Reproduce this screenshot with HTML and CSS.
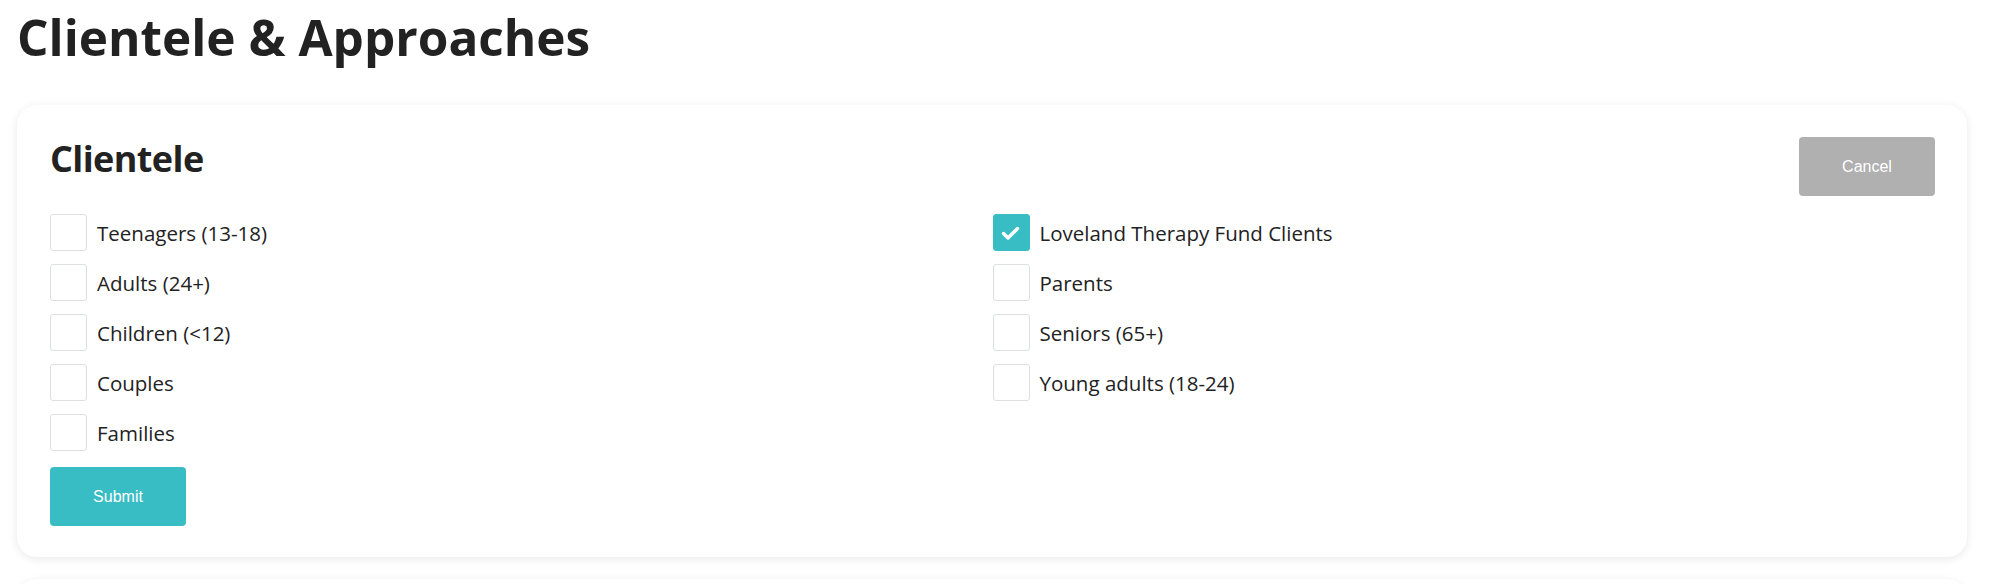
FILE: index.html
```html
<!DOCTYPE html>
<html lang="en">
<head>
<meta charset="utf-8">
<title>Clientele &amp; Approaches</title>
<link rel="stylesheet" href="styles.css">
</head>
<body>
<main class="page">
  <h1 class="page-title">Clientele &amp; Approaches</h1>
  <section class="card">
    <div class="card-header">
      <h2 class="card-title">Clientele</h2>
      <button class="btn btn-cancel" type="button">Cancel</button>
    </div>
    <ul class="options">
      <li class="option"><span class="box"></span><span class="label">Teenagers (13-18)</span></li>
      <li class="option"><span class="box box-checked"><svg viewBox="0 0 37 37" width="37" height="37"><polyline points="11.5,19.5 16,24 25.5,14.5" fill="none" stroke="#fff" stroke-width="3.4" stroke-linecap="round" stroke-linejoin="round"/></svg></span><span class="label">Loveland Therapy Fund Clients</span></li>
      <li class="option"><span class="box"></span><span class="label">Adults (24+)</span></li>
      <li class="option"><span class="box"></span><span class="label">Parents</span></li>
      <li class="option"><span class="box"></span><span class="label">Children (&lt;12)</span></li>
      <li class="option"><span class="box"></span><span class="label">Seniors (65+)</span></li>
      <li class="option"><span class="box"></span><span class="label">Couples</span></li>
      <li class="option"><span class="box"></span><span class="label">Young adults (18-24)</span></li>
      <li class="option"><span class="box"></span><span class="label">Families</span></li>
    </ul>
    <button class="btn btn-submit" type="button">Submit</button>
  </section>
  <section class="card card-next"></section>
</main>
</body>
</html>
```

FILE: styles.css
```css
* { box-sizing: border-box; }
html, body { margin: 0; padding: 0; background: #ffffff; }
body {
  font-family: "Open Sans", "Liberation Sans", sans-serif;
  color: #222222;
  overflow: hidden;
}
.page {
  padding: 0 33px 0 17px;
}
.page-title {
  margin: 0;
  padding-top: 6px;
  font-size: 49.5px;
  line-height: 63px;
  font-weight: 700;
  color: #222222;
}
.card {
  margin-top: 36px;
  background: #ffffff;
  border-radius: 20px;
  box-shadow: 0 2px 10px rgba(0, 0, 0, 0.09);
  padding: 32px 32px 31px 33px;
}
.card-header {
  display: flex;
  justify-content: space-between;
  align-items: flex-start;
}
.card-title {
  margin: 0;
  font-size: 36px;
  line-height: 42px;
  padding-top: 1px;
  font-weight: 700;
  letter-spacing: -0.6px;
}
.btn {
  border: none;
  border-radius: 4px;
  width: 136px;
  height: 59px;
  color: #ffffff;
  font-family: "Liberation Sans", Arial, sans-serif;
  font-size: 16px;
  padding: 0;
}
.btn-cancel { background: #b0b0b0; }
.btn-submit { background: #38bdc4; margin-top: 16px; display: block; }
.options {
  list-style: none;
  margin: 18px 0 0 0;
  padding: 0;
  display: grid;
  grid-template-columns: 1fr 1fr;
  row-gap: 13px;
}
.option {
  display: flex;
  align-items: center;
  gap: 10px;
  height: 37px;
}
.box {
  width: 37px;
  height: 37px;
  flex: none;
  border: 1.5px solid #dde0e0;
  border-radius: 3px;
  background: #ffffff;
  display: block;
}
.box-checked {
  background: #38bdc4;
  border-color: #38bdc4;
  position: relative;
}
.box-checked svg {
  position: absolute;
  left: -1.5px;
  top: -1.5px;
}
.label {
  font-size: 20.5px;
  line-height: 24px;
  color: #222222;
}
.card-next {
  margin-top: 22px;
  height: 100px;
  padding: 0;
}
```
